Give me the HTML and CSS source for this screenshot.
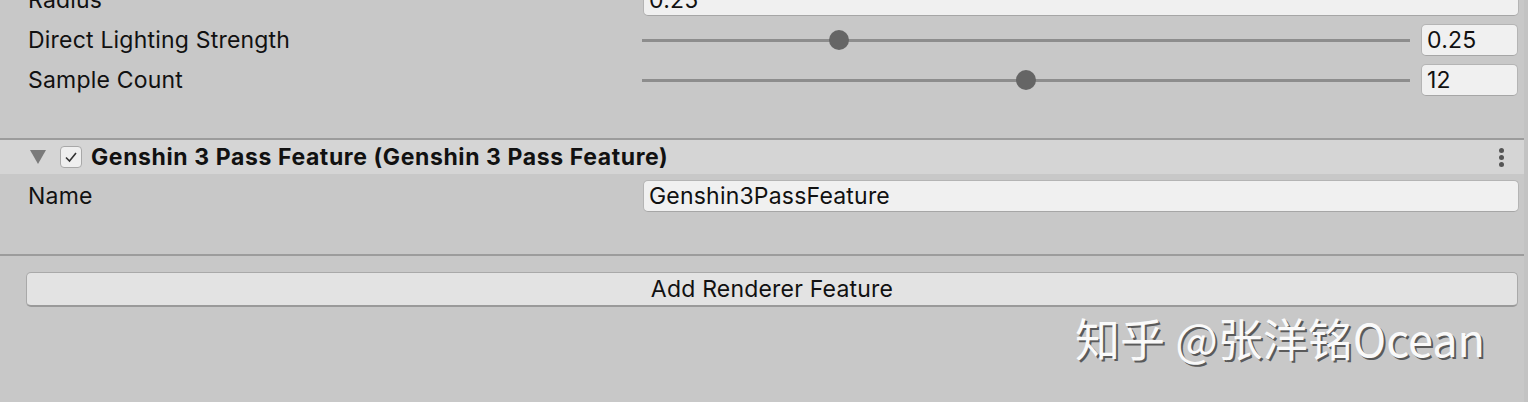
FILE: index.html
```html
<!DOCTYPE html>
<html>
<head>
<meta charset="utf-8">
<link rel="stylesheet" href="styles.css">
</head>
<body>
<div class="panel">
  <section class="group first">
    <div class="row">
      <div class="label">Radius</div>
      <div class="field">0.25</div>
    </div>
    <div class="row">
      <div class="label">Direct Lighting Strength</div>
      <div class="slider">
        <div class="track"><div class="knob" style="left:187px"></div></div>
        <div class="num">0.25</div>
      </div>
    </div>
    <div class="row">
      <div class="label">Sample Count</div>
      <div class="slider">
        <div class="track"><div class="knob" style="left:374px"></div></div>
        <div class="num">12</div>
      </div>
    </div>
  </section>
  <div class="header">
    <span class="fold"></span>
    <span class="check"><svg width="14" height="12" viewBox="0 0 14 12"><path d="M2 6.5 L5.5 10 L12 2" fill="none" stroke="#333" stroke-width="1.6"/></svg></span>
    <span class="title">Genshin 3 Pass Feature (Genshin 3 Pass Feature)</span>
    <span class="menu"><i></i><i></i><i></i></span>
  </div>
  <section class="group second">
    <div class="row">
      <div class="label">Name</div>
      <div class="field">Genshin3PassFeature</div>
    </div>
  </section>
  <div class="actions">
    <div class="button">Add Renderer Feature</div>
    <div class="watermark">知乎 @张洋铭Ocean</div>
  </div>
</div>
</body>
</html>
```
FILE: styles.css
```css
html, body {
  margin: 0;
  padding: 0;
  background: #c8c8c8;
  overflow: hidden;
}
.panel {
  width: 1524px;
  height: 402px;
  border-right: 4px solid #c3c3c3;
  font-family: Inter, "Noto Sans", sans-serif;
  font-size: 23px;
  letter-spacing: 0.2px;
  color: #111;
  overflow: hidden;
}
.group {
  display: flex;
  flex-direction: column;
}
.group.first {
  margin-top: -20px;
  padding-bottom: 38px;
  border-bottom: 2px solid #9c9c9c;
}
.row {
  height: 40px;
  display: grid;
  grid-template-columns: 615px 876px;
  align-items: center;
  padding-left: 28px;
}
.label {
  white-space: nowrap;
}
.field, .num {
  height: 32px;
  box-sizing: border-box;
  background: #f0f0f0;
  border: 1px solid #b4b4b4;
  border-bottom-color: #a6a6a6;
  border-radius: 5px;
  padding-left: 5px;
  line-height: 30px;
}
.slider {
  display: flex;
  align-items: center;
  gap: 11px;
  margin-left: -1px;
}
.track {
  position: relative;
  width: 768px;
  height: 3px;
  background: #8d8d8d;
}
.knob {
  position: absolute;
  top: -9px;
  width: 20px;
  height: 20px;
  border-radius: 50%;
  background: #656565;
}
.num {
  width: 97px;
}
.header {
  height: 34px;
  background: #d5d5d5;
  display: flex;
  align-items: center;
  padding-left: 30px;
  padding-right: 20px;
}
.fold {
  width: 0;
  height: 0;
  border-left: 8px solid transparent;
  border-right: 8px solid transparent;
  border-top: 14px solid #7a7a7a;
  margin-right: 14px;
}
.check {
  width: 22px;
  height: 22px;
  box-sizing: border-box;
  border: 1px solid #a8a8a8;
  border-radius: 4px;
  background: #efefef;
  display: flex;
  align-items: center;
  justify-content: center;
  margin-right: 9px;
}
.title {
  font-weight: 700;
  letter-spacing: 0.6px;
  flex: 1;
  white-space: nowrap;
}
.menu {
  display: flex;
  flex-direction: column;
  gap: 2px;
}
.menu i {
  width: 5px;
  height: 5px;
  border-radius: 50%;
  background: #555;
}
.group.second {
  padding-top: 2px;
  padding-bottom: 38px;
  border-bottom: 2px solid #9c9c9c;
}
.actions {
  padding: 16px 6px 0 26px;
  display: flex;
  flex-direction: column;
}
.button {
  height: 35px;
  box-sizing: border-box;
  background: #e3e3e3;
  border: 1px solid #a9a9a9;
  border-bottom: 2px solid #9a9a9a;
  border-radius: 5px;
  text-align: center;
  line-height: 32px;
}
.watermark {
  align-self: flex-end;
  margin-right: 33px;
  margin-top: 3px;
  font-family: "Noto Sans CJK SC", "Noto Sans", sans-serif;
  font-size: 45px;
  font-weight: 400;
  color: #fafafa;
  text-shadow: 2px 2px 0 #5a5a5a;
  letter-spacing: 0;
  line-height: 56px;
}
```
